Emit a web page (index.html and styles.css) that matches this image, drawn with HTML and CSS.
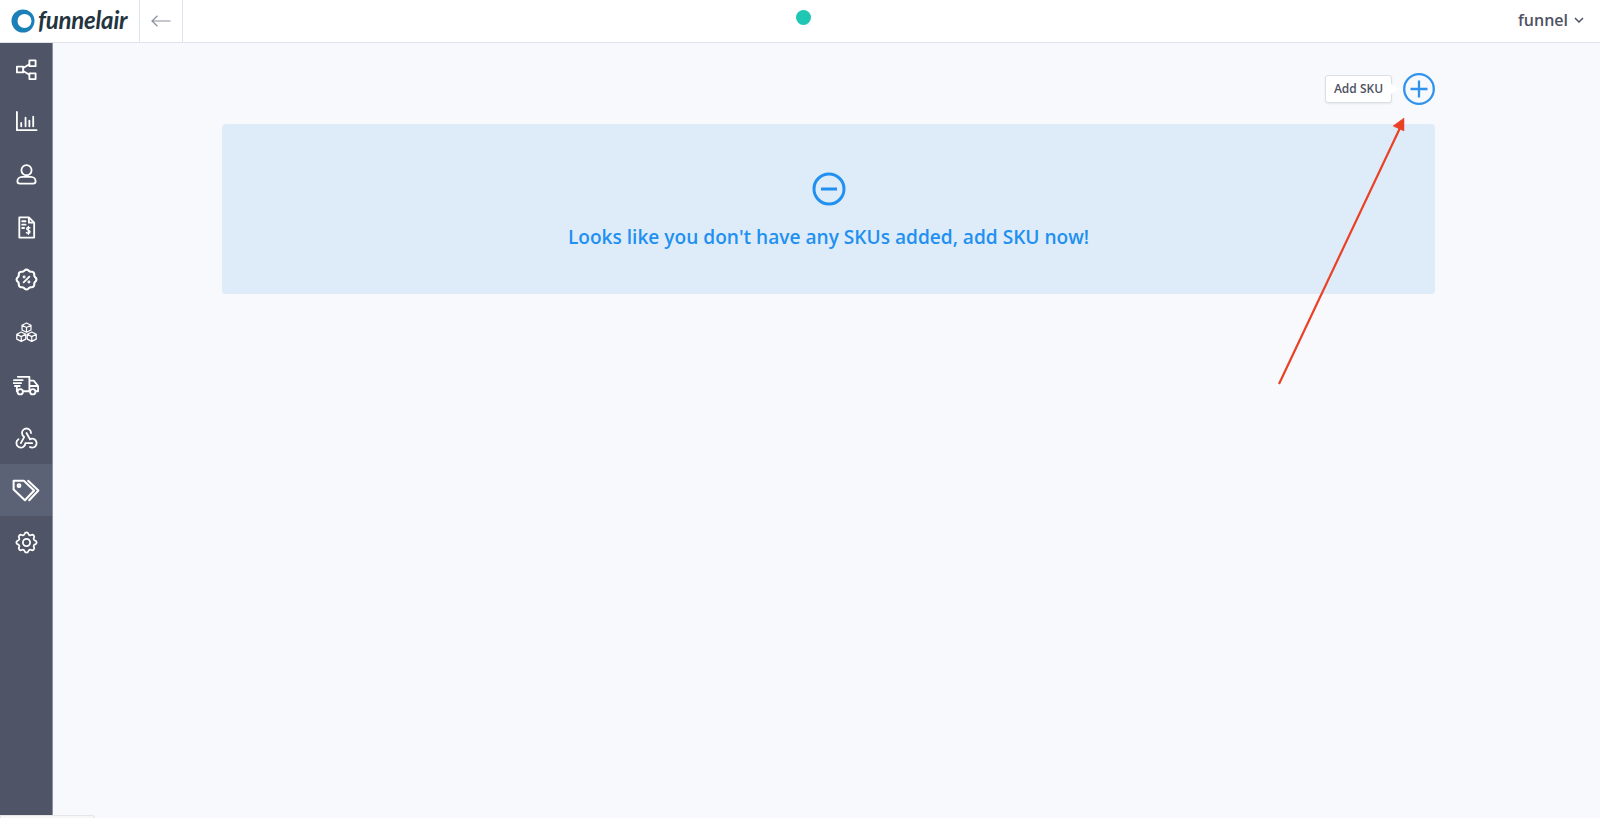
FILE: index.html

```html
<!DOCTYPE html>
<html lang="en">
<head>
  <meta charset="UTF-8" />
  <meta name="viewport" content="width=device-width, initial-scale=1.0" />
  <title>SKUs</title>
  <link rel="stylesheet" href="styles.css">
</head>
<body>
  <header class="topbar">
    <div class="brand">
      <svg class="brand-ring" viewBox="0 0 24 24" width="24" height="24"><path fill="#1b7fb8" fill-rule="evenodd" d="M12 0.500a11.500 11.500 0 1 1-.01 23 11.500 11.500 0 0 1 .01-23zM13.500 5a7 7 0 1 0 .01 14 7 7 0 0 0-.01-14z"/></svg>
      <span class="brand-name">funnelair</span>
    </div>
    <button class="back-btn" aria-label="Back">
      <svg viewBox="0 0 20 12" width="20" height="12" fill="none" stroke="#8c8f9e" stroke-width="1.200"><path d="M19.500 6H1M6.500 .8 1 6l5.500 5.200"/></svg>
    </button>
    <div class="status"><span class="status-dot"></span></div>
    <div class="account">funnel
      <svg viewBox="0 0 10 6" width="10" height="6" fill="none" stroke="#4e5263" stroke-width="1.500"><path d="M1 1l4 4 4-4"/></svg>
    </div>
  </header>

  <div class="layout">
    <nav class="sidebar">
      <a class="nav-item"><svg viewBox="0 0 24 24"><rect x="2" y="9" width="6.500" height="6"/><rect x="15" y="2.500" width="6.500" height="6"/><rect x="15" y="16" width="6.500" height="6"/><path d="M8.500 10.500 15 6.500M8.500 13.500 15 17.500"/></svg></a>
      <a class="nav-item"><svg viewBox="0 0 24 24"><path d="M2 2v19h20.500M6.500 17v-3.500M11 17V8M15 17v-6M19 17V7"/></svg></a>
      <a class="nav-item"><svg viewBox="0 0 24 24"><circle cx="12" cy="7.500" r="5.300"/><path d="M7.500 14.500h9c3 0 5 2 5 4.500 0 1.800-1 2.500-2.500 2.500H5c-1.500 0-2.500-.7-2.500-2.500 0-2.500 2-4.500 5-4.500z"/></svg></a>
      <a class="nav-item"><svg viewBox="0 0 24 24"><path d="M4.500 1.500h10l5.500 5.500v15.500H4.500zM14.500 1.500V7H20M7.500 5.500h3.500M7.500 9h3.500M7.500 12.500h2"/><path d="M15.500 12.500c-.6-.8-3.300-1-3.300.8s3.500 1.200 3.500 3.200-3 1.800-3.800.7M14 11v8" stroke-width="1.400"/></svg></a>
      <a class="nav-item"><svg viewBox="0 0 24 24"><path d="M5 7.200a2.200 2.200 0 0 1 2.200 -2.200h1a2.200 2.200 0 0 0 1.550 -.64l.7 -.7a2.200 2.200 0 0 1 3.120 0l.7 .7c.412 .41 .97 .64 1.550 .64h1a2.200 2.200 0 0 1 2.200 2.200v1c0 .58 .23 1.138 .64 1.550l.7 .7a2.200 2.200 0 0 1 0 3.120l-.7 .7a2.200 2.200 0 0 0 -.64 1.550v1a2.200 2.200 0 0 1 -2.200 2.200h-1a2.200 2.200 0 0 0 -1.550 .64l-.7 .7a2.200 2.200 0 0 1 -3.120 0l-.7 -.7a2.200 2.200 0 0 0 -1.550 -.64h-1a2.200 2.200 0 0 1 -2.200 -2.200v-1a2.200 2.200 0 0 0 -.64 -1.550l-.7 -.7a2.200 2.200 0 0 1 0 -3.120l.7 -.7a2.200 2.200 0 0 0 .64 -1.550v-1" transform="translate(-1.800 -1.800) scale(1.150)"/><path d="M9 15l6-6"/><circle cx="9.500" cy="9.500" r=".6"/><circle cx="14.500" cy="14.500" r=".6"/></svg></a>
      <a class="nav-item nav-boxes"><svg viewBox="0 0 24 22"><path d="M12 1l4.700 2.400v5L12 10.800 7.300 8.400v-5zM7.300 3.400 12 5.800l4.700-2.400M12 5.800v5M6.500 10.500l4.700 2.400v5l-4.700 2.400-4.700-2.400v-5zM1.800 12.900l4.700 2.400 4.700-2.400M6.500 15.300v5M17.500 10.500l4.700 2.400v5l-4.700 2.400-4.700-2.400v-5zM12.800 12.900l4.700 2.400 4.700-2.400M17.500 15.300v5" stroke-width="1.300"/></svg></a>
      <a class="nav-item nav-truck"><svg viewBox="0 0 28 22"><path d="M5 2.500h12v15h-6M4 17.500v-4M17 6.500h4.500L26 12v5.500h-2M17 17.500h.5M18.500 12H26M1 6h9M.5 9h8M2 12h5"/><circle cx="7.500" cy="18" r="2.800"/><circle cx="20.500" cy="18" r="2.800"/></svg></a>
      <a class="nav-item nav-large"><svg viewBox="0 0 24 24"><path d="M4.876 13.610a4 4 0 1 0 6.124 3.390h6"/><path d="M15.066 20.502a4 4 0 1 0 1.934 -7.502c-.706 0 -1.424 .179 -2 .5l-3 -5.500"/><path d="M16 8a4 4 0 1 0 -8 0c0 1.506 .77 2.818 2 3.500l-3 5.500"/></svg></a>
      <a class="nav-item active"><svg viewBox="0 0 26 24"><path d="M1.500 3.500h9.500l9.500 9L12 21.500l-10.500-10z"/><circle cx="6.500" cy="8" r="1.300"/><path d="M15 3.500l9.500 9-8.500 9"/></svg></a>
      <a class="nav-item nav-large"><svg viewBox="0 0 24 24"><path d="M10.325 4.317c.426 -1.756 2.924 -1.756 3.350 0a1.724 1.724 0 0 0 2.573 1.066c1.543 -.94 3.310 .826 2.370 2.370a1.724 1.724 0 0 0 1.065 2.572c1.756 .426 1.756 2.924 0 3.350a1.724 1.724 0 0 0 -1.066 2.573c.94 1.543 -.826 3.310 -2.370 2.370a1.724 1.724 0 0 0 -2.572 1.065c-.426 1.756 -2.924 1.756 -3.350 0a1.724 1.724 0 0 0 -2.573 -1.066c-1.543 .94 -3.310 -.826 -2.370 -2.370a1.724 1.724 0 0 0 -1.065 -2.572c-1.756 -.426 -1.756 -2.924 0 -3.350a1.724 1.724 0 0 0 1.066 -2.573c-.94 -1.543 .826 -3.310 2.370 -2.370c1 .608 2.296 .07 2.572 -1.065z"/><circle cx="12" cy="12" r="3.200"/></svg></a>
    </nav>

    <main class="content">
      <div class="toolbar">
        <span class="tooltip">Add SKU</span>
        <button class="add-btn" aria-label="Add SKU">
          <svg viewBox="0 0 32 32" width="32" height="32" fill="none" stroke="#2f93ee" stroke-width="2.300"><circle cx="16" cy="16" r="14.800"/><path d="M16 7.500v17M7.500 16h17"/></svg>
        </button>
      </div>
      <div class="empty-banner">
        <svg viewBox="0 0 34 34" width="34" height="34" fill="none" stroke="#2190f0" stroke-width="3"><circle cx="17" cy="17" r="15"/><path d="M9 17h16"/></svg>
        <p>Looks like you don't have any SKUs added, add SKU now!</p>
      </div>
    </main>
  </div>

  <div class="bottom-tab"></div>

  <svg class="annotation" viewBox="0 0 1600 818" width="1600" height="818">
    <path d="M1279 384 1400 128" stroke="#ea4125" stroke-width="2.200" fill="none"/>
    <path d="M1404 118l-11 8 11 5z" fill="#ea4125" stroke="#ea4125" stroke-width=".5"/>
  </svg>
</body>
</html>
```

FILE: styles.css

```css
:root {
  --sidebar: #4f5466;
  --sidebar-active: #5c6276;
  --line: #e1e3ec;
  --blue: #2190f0;
  --page: #f7f9fd;
}

html, body {
  height: 100%;
}

body {
  font-family: 'Open Sans', 'Noto Sans', sans-serif;
  margin: 0;
  background: var(--page);
  color: #4e5263;
  overflow: hidden;
}

.topbar {
  display: flex;
  align-items: center;
  height: 42px;
  background: white;
  border-bottom: 1px solid var(--line);
}

.brand {
  display: flex;
  align-items: center;
  gap: 3px;
  width: 128px;
  padding-left: 11px;
  height: 100%;
  flex-shrink: 0;
}

.brand-ring {
  flex-shrink: 0;
}

.brand-name {
  font-family: 'Lato', sans-serif;
  font-style: italic;
  font-weight: 700;
  font-size: 24px;
  letter-spacing: -0.2px;
  color: #24343f;
  line-height: 1;
  padding-bottom: 3px;
}

.back-btn {
  display: flex;
  align-items: center;
  justify-content: center;
  width: 44px;
  height: 100%;
  padding: 0;
  background: none;
  border: none;
  border-left: 1px solid var(--line);
  border-right: 1px solid var(--line);
}

.status {
  flex: 1;
  display: flex;
  justify-content: center;
  padding-right: 95px;
  padding-bottom: 8px;
}

.status-dot {
  width: 15px;
  height: 15px;
  border-radius: 50%;
  background: #1fc6b4;
}

.account {
  display: flex;
  align-items: center;
  gap: 6px;
  padding-right: 16px;
  padding-bottom: 2px;
  font-size: 16px;
  font-weight: 600;
}

.layout {
  display: flex;
  height: 772px;
}

.sidebar {
  width: 53px;
  flex-shrink: 0;
  background: var(--sidebar);
  border-right: 1px solid #8d91a1;
  box-sizing: border-box;
}

.nav-item {
  display: flex;
  align-items: center;
  justify-content: center;
  height: 52.600px;
}

.nav-item.active {
  background: var(--sidebar-active);
}

.nav-item svg {
  width: 23px;
  height: 23px;
  fill: none;
  stroke: white;
  stroke-width: 1.900;
  stroke-linejoin: round;
  stroke-linecap: round;
}

.nav-item.active svg {
  width: 28px;
  height: 26px;
}

.nav-boxes svg {
  height: 21px;
}

.nav-truck svg {
  width: 27px;
  height: 22px;
}

.nav-item.nav-large svg {
  width: 27px;
  height: 27px;
  stroke-width: 1.600;
}

.content {
  flex: 1;
  padding: 30px 165px 0 169px;
}

.toolbar {
  display: flex;
  align-items: center;
  justify-content: flex-end;
  height: 32px;
}

.tooltip {
  position: relative;
  display: flex;
  align-items: center;
  justify-content: center;
  width: 67px;
  height: 28px;
  margin-right: 11px;
  padding-bottom: 1px;
  background: white;
  border: 1px solid #dcdee6;
  border-radius: 3px;
  box-shadow: 0 1px 2px rgba(0,0,0,0.08);
  font-size: 12px;
  font-weight: 600;
  box-sizing: border-box;
}

.tooltip::after {
  content: "";
  position: absolute;
  right: -9px;
  top: 8px;
  border-left: 9px solid white;
  border-top: 5px solid transparent;
  border-bottom: 5px solid transparent;
}

.add-btn {
  display: flex;
  width: 32px;
  height: 32px;
  padding: 0;
  background: none;
  border: none;
}

.empty-banner {
  display: flex;
  flex-direction: column;
  align-items: center;
  height: 170px;
  margin-top: 19px;
  padding-top: 48px;
  box-sizing: border-box;
  background: #deecfa;
  border-radius: 4px;
  color: var(--blue);
}

.empty-banner p {
  margin: 18px 0 0;
  font-size: 19.100px;
  font-weight: 600;
  line-height: 26px;
}

.bottom-tab {
  position: absolute;
  left: 0;
  bottom: 0;
  width: 95px;
  height: 3px;
  background: #f7f7f8;
  border: 1px solid #e6e6e8;
  border-bottom: none;
  border-radius: 0 3px 0 0;
  box-sizing: border-box;
}

.annotation {
  position: absolute;
  left: 0;
  top: 0;
  pointer-events: none;
}
```
